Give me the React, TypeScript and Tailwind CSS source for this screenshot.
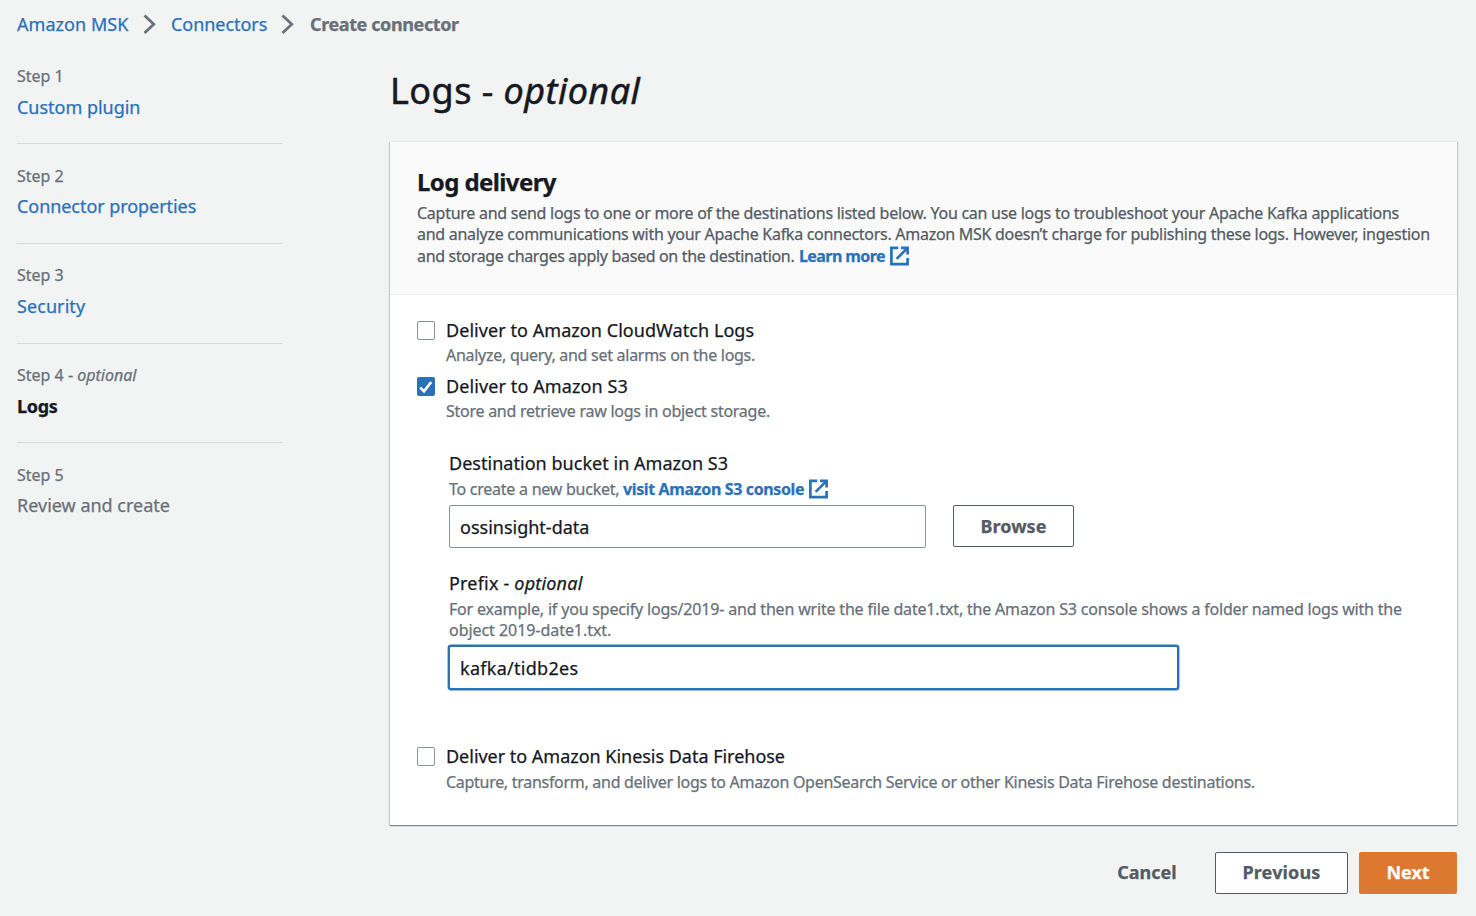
import React from "react";

function Chevron({ className }: { className: string }) {
  return (
    <svg className={`h-[20px] w-[14px] shrink-0 ${className}`} viewBox="0 0 14 20" fill="none" stroke="#687078" strokeWidth="2.7">
      <path d="M1.5 1.4 10.8 10.2 1.5 19" />
    </svg>
  );
}

function ExternalIcon() {
  return (
    <svg className="h-[20px] w-[20px] shrink-0" viewBox="0 0 20 20" fill="none" stroke="#2a71b8" strokeWidth="2.7">
      <path d="M8.2 1.9H1.4V18.1H17.6V12" />
      <path d="M11 1.9H17.6V8.6" />
      <path d="M17.4 2.1 6.6 12.9" />
    </svg>
  );
}

function Checkbox({ checked = false }: { checked?: boolean }) {
  return checked ? (
    <span className="mt-[3px] flex h-[19px] w-[18px] shrink-0 items-center justify-center rounded-[2px] bg-[#2a71b8]">
      <svg className="h-[18px] w-[18px]" viewBox="0 0 18 18" fill="none" stroke="#fff" strokeWidth="2.6">
        <path d="M3.2 9.6 7 13.4 14.2 4" />
      </svg>
    </span>
  ) : (
    <span className="mt-[3px] h-[18.6px] w-[18px] shrink-0 rounded-[2px] border-[1.3px] border-[#879596] bg-white" />
  );
}

type StepProps = { step: React.ReactNode; title: string; tone: string; gap?: string; last?: boolean };

function Step({ step, title, tone, gap = "mt-2 pb-6", last = false }: StepProps) {
  return (
    <li className={last ? "" : "mb-[20.7px] border-b border-[#d5dbdb]"}>
      <div className="text-[16px] leading-[22px] text-[#687078]">{step}</div>
      <div className={`text-[18px] leading-6 ${gap} ${tone}`}>{title}</div>
    </li>
  );
}

type OptionProps = { label: string; labelClass: string; desc: string; descClass: string; checked?: boolean };

function Option({ label, labelClass, desc, descClass, checked }: OptionProps) {
  return (
    <div className="flex h-14 pl-px">
      <Checkbox checked={checked} />
      <div className="ml-[11px]">
        <div className={`text-[18px] leading-6 text-[#16191f] ${labelClass}`}>{label}</div>
        <div className={`text-[16px] leading-[21.3px] text-[#687078] ${descClass}`}>{desc}</div>
      </div>
    </div>
  );
}

export default function App() {
  return (
    <div className="h-[916px] w-[1476px] overflow-hidden bg-[#f2f3f3] font-['Noto_Sans',sans-serif] whitespace-nowrap [-webkit-text-stroke:0.25px]">
      <nav className="flex h-9 items-center pt-3 pl-[17px] text-[18px] leading-6 text-[#2a71b8]">
        <a className="w-[126px] tracking-[0.05px]">Amazon MSK</a>
        <Chevron className="mr-[14px]" />
        <a className="w-[110px] tracking-[-0.05px]">Connectors</a>
        <Chevron className="mr-[15px]" />
        <span className="font-bold tracking-[-0.4px] text-[#687078]">Create connector</span>
      </nav>

      <div className="flex">
        <ol className="mt-[29px] ml-[17px] w-[266px]">
          <Step step="Step 1" title="Custom plugin" tone="text-[#2a71b8] tracking-[-0.02px]" />
          <Step step="Step 2" title="Connector properties" tone="text-[#2a71b8] tracking-[-0.06px]" gap="mt-[7px] pb-[25px]" />
          <Step step="Step 3" title="Security" tone="text-[#2a71b8] tracking-[0.08px]" gap="mt-2 pb-[24.4px]" />
          <Step step={<>Step 4 - <em>optional</em></>} title="Logs" tone="font-bold tracking-[-0.3px] text-[#16191f]" gap="mt-2 pb-[23.6px]" />
          <Step step="Step 5" title="Review and create" tone="text-[#687078]" gap="mt-[7px]" last />
        </ol>

        <main className="ml-[106px] w-[1068px] pt-[32px]">
          <h1 className="pl-px text-[36px] leading-[45px] tracking-[0.45px] text-[#16191f] [-webkit-text-stroke:0.5px]">
            Logs - <em>optional</em>
          </h1>

          <section className="mt-[28px] ml-px h-[684px] border-t border-[#eaeded] bg-white shadow-[0_1px_1px_0_rgba(0,28,36,0.3),1px_1px_1px_0_rgba(0,28,36,0.15),-1px_1px_1px_0_rgba(0,28,36,0.15)]">
            <header className="h-[153px] border-b border-[#eaeded] bg-[#fafafa] pt-[25px] pl-[27px]">
              <h2 className="text-[24px] leading-[30px] font-bold tracking-[-0.6px] text-[#16191f]">Log delivery</h2>
              <div className="mt-[5.5px] text-[16px] leading-[21.3px] text-[#545b64]">
                <p className="tracking-[-0.263px]">
                  Capture and send logs to one or more of the destinations listed below. You can use logs to troubleshoot your Apache Kafka applications
                </p>
                <p className="tracking-[-0.28px]">
                  and analyze communications with your Apache Kafka connectors. Amazon MSK doesn’t charge for publishing these logs. However, ingestion
                </p>
                <p className="flex items-center pt-[0.6px]">
                  <span className="w-[382px] tracking-[-0.33px]">and storage charges apply based on the destination.</span>
                  <a className="w-[91px] font-bold tracking-[-0.58px] text-[#2a71b8]">Learn more</a>
                  <ExternalIcon />
                </p>
              </div>
            </header>

            <div className="pt-[23px] pl-[26px]">
              <Option
                label="Deliver to Amazon CloudWatch Logs"
                labelClass="tracking-[0.06px]"
                desc="Analyze, query, and set alarms on the logs."
                descClass="mt-[2.5px] tracking-[-0.275px]"
              />
              <Option
                label="Deliver to Amazon S3"
                labelClass="tracking-[0.1px]"
                desc="Store and retrieve raw logs in object storage."
                descClass="mt-[2.5px] tracking-[-0.26px]"
                checked
              />

              <div className="ml-[33px] pt-[21px]">
                <div className="text-[18px] leading-6 tracking-[0.03px] text-[#16191f]">Destination bucket in Amazon S3</div>
                <div className="mt-[3px] flex h-[21.3px] items-center text-[16px] text-[#687078]">
                  <span className="w-[174px] tracking-[-0.25px]">To create a new bucket,</span>
                  <a className="w-[186px] font-bold tracking-[-0.37px] text-[#2a71b8]">visit Amazon S3 console</a>
                  <ExternalIcon />
                </div>
                <div className="mt-[5.7px] flex">
                  <div className="h-[43px] w-[477px] rounded-[2px] border border-[#879596] bg-white pl-[10px] text-[18px] leading-[43px] text-[#16191f]">ossinsight-data</div>
                  <button className="ml-[27px] h-[42px] w-[121px] rounded-[2px] border border-[#545b64] bg-white text-[18px] leading-[40px] font-bold tracking-[0.05px] text-[#545b64]">Browse</button>
                </div>
                <div className="mt-[23px] text-[18px] leading-6 tracking-[0.19px] text-[#16191f]">
                  Prefix - <em>optional</em>
                </div>
                <div className="mt-[4px] text-[16px] leading-[21.3px] text-[#687078]">
                  <p className="tracking-[-0.183px]">
                    For example, if you specify logs/2019- and then write the file date1.txt, the Amazon S3 console shows a folder named logs with the
                  </p>
                  <p className="tracking-[-0.05px]">object 2019-date1.txt.</p>
                </div>
                <div className="mt-[4.4px] h-[43px] w-[729px] rounded-[2px] border border-[#2a71b8] bg-white pl-[10px] text-[18px] leading-[43px] tracking-[0.28px] text-[#16191f] shadow-[0_0_0_1.4px_#2a71b8]">kafka/tidb2es</div>
              </div>

              <div className="mt-[55px]">
                <Option
                  label="Deliver to Amazon Kinesis Data Firehose"
                  labelClass="tracking-[-0.02px]"
                  desc="Capture, transform, and deliver logs to Amazon OpenSearch Service or other Kinesis Data Firehose destinations."
                  descClass="mt-[4px] tracking-[-0.29px]"
                />
              </div>
            </div>
          </section>

          <footer className="mt-[27px] flex h-[42px] justify-end text-[18px] font-bold">
            <button className="w-[113px] pr-[15px] pb-[2px] leading-[40px] text-[#545b64]">Cancel</button>
            <button className="ml-[4px] w-[133px] rounded-[2px] border border-[#545b64] bg-white pb-[2px] leading-[38px] tracking-[0.15px] text-[#545b64]">Previous</button>
            <button className="ml-[11px] w-[98px] rounded-[2px] bg-[#dd7831] pb-[2px] leading-[40px] text-white">Next</button>
          </footer>
        </main>
      </div>
    </div>
  );
}
